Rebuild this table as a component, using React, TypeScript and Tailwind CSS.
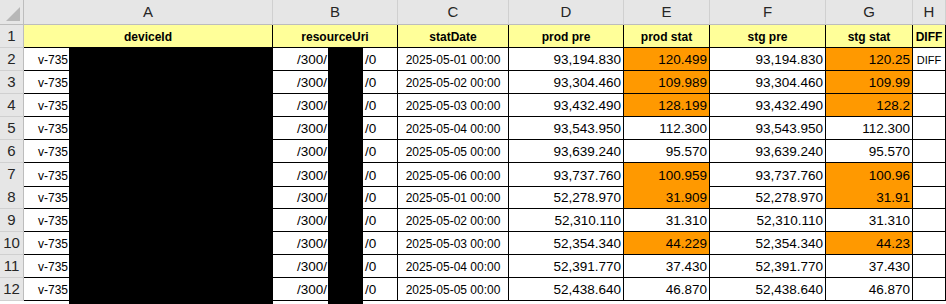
type Row = {
  n: number;
  date: string;
  prodPre: string;
  prodStat: string;
  stgPre: string;
  stgStat: string;
  hot: boolean;
  diff?: string;
};

const rows: Row[] = [
  { n: 2, date: "2025-05-01 00:00", prodPre: "93,194.830", prodStat: "120.499", stgPre: "93,194.830", stgStat: "120.25", hot: true, diff: "DIFF" },
  { n: 3, date: "2025-05-02 00:00", prodPre: "93,304.460", prodStat: "109.989", stgPre: "93,304.460", stgStat: "109.99", hot: true },
  { n: 4, date: "2025-05-03 00:00", prodPre: "93,432.490", prodStat: "128.199", stgPre: "93,432.490", stgStat: "128.2", hot: true },
  { n: 5, date: "2025-05-04 00:00", prodPre: "93,543.950", prodStat: "112.300", stgPre: "93,543.950", stgStat: "112.300", hot: false },
  { n: 6, date: "2025-05-05 00:00", prodPre: "93,639.240", prodStat: "95.570", stgPre: "93,639.240", stgStat: "95.570", hot: false },
  { n: 7, date: "2025-05-06 00:00", prodPre: "93,737.760", prodStat: "100.959", stgPre: "93,737.760", stgStat: "100.96", hot: true },
  { n: 8, date: "2025-05-01 00:00", prodPre: "52,278.970", prodStat: "31.909", stgPre: "52,278.970", stgStat: "31.91", hot: true },
  { n: 9, date: "2025-05-02 00:00", prodPre: "52,310.110", prodStat: "31.310", stgPre: "52,310.110", stgStat: "31.310", hot: false },
  { n: 10, date: "2025-05-03 00:00", prodPre: "52,354.340", prodStat: "44.229", stgPre: "52,354.340", stgStat: "44.23", hot: true },
  { n: 11, date: "2025-05-04 00:00", prodPre: "52,391.770", prodStat: "37.430", stgPre: "52,391.770", stgStat: "37.430", hot: false },
  { n: 12, date: "2025-05-05 00:00", prodPre: "52,438.640", prodStat: "46.870", stgPre: "52,438.640", stgStat: "46.870", hot: false },
];

const letters = ["A", "B", "C", "D", "E", "F", "G", "H"];
const headers = ["deviceId", "resourceUri", "statDate", "prod pre", "prod stat", "stg pre", "stg stat", "DIFF"];

const cell = "flex items-end border-r border-b border-black leading-[16px] pb-[2px] overflow-hidden whitespace-nowrap";
const num = "justify-end pr-[2px] text-[13.5px]";

export default function App() {
  return (
    <div className="relative w-[946px] h-[304px] overflow-hidden bg-white text-black font-['Liberation_Sans',Arial,sans-serif]">
      <div className="grid grid-cols-[24px_249px_125px_111px_115px_86px_116px_87px_33px] auto-rows-[23px] [grid-template-rows:25px]">
        {/* column letters */}
        <div className="relative bg-[#e6e6e6] border-r border-b border-[#bdbdbd]">
          <svg className="absolute right-[3px] bottom-[3px]" width="14" height="14" viewBox="0 0 14 14">
            <polygon points="14,0 14,14 0,14" fill="#b7b7b7" />
          </svg>
        </div>
        {letters.map((l) => (
          <div
            key={l}
            className="flex items-center justify-center bg-[#e6e6e6] border-r border-b border-r-[#d0d0d0] border-b-[#bdbdbd] text-[15px] text-[#262626]"
          >
            {l}
          </div>
        ))}

        {/* row 1 */}
        <div className="flex items-center justify-center bg-[#e6e6e6] border-r border-b border-r-[#bdbdbd] border-b-[#d0d0d0] text-[15px] text-[#262626]">
          1
        </div>
        {headers.map((h) => (
          <div key={h} className={`${cell} justify-center bg-[#ffff99] text-[12px] font-bold`}>
            {h}
          </div>
        ))}

        {rows.map((r) => (
          <Line key={r.n} r={r} />
        ))}
      </div>

      {/* redactions */}
      <div className="absolute left-[69px] top-[48px] w-[204px] h-[256px] bg-black" />
      <div className="absolute left-[328px] top-[48px] w-[35px] h-[256px] bg-black" />
    </div>
  );
}

function Line({ r }: { r: Row }) {
  const tall = r.n === 7 ? "h-[24px]" : "h-[23px]";
  const hot = r.hot ? "bg-[#ff9900]" : "";
  return (
    <>
      <div
        className={`${tall} flex items-center justify-center bg-[#e6e6e6] border-r border-b border-r-[#bdbdbd] border-b-[#d0d0d0] text-[15px] text-[#262626]`}
      >
        {r.n}
      </div>
      <div className={`${tall} ${cell} pl-[14px] text-[12px]`}>v-735</div>
      <div className={`${tall} ${cell} pl-[24px] text-[13.5px]`}>
        <span className="w-[31px] shrink-0">/300/</span>
        <span className="w-[37px] shrink-0" />
        <span>/0</span>
      </div>
      <div className={`${tall} ${cell} justify-center text-[12px]`}>{r.date}</div>
      <div className={`${tall} ${cell} ${num}`}>{r.prodPre}</div>
      <div className={`${tall} ${cell} ${num} ${hot}`}>{r.prodStat}</div>
      <div className={`${tall} ${cell} ${num}`}>{r.stgPre}</div>
      <div className={`${tall} ${cell} ${num} ${hot}`}>{r.stgStat}</div>
      <div className={`${tall} ${cell} justify-center text-[11px]`}>{r.diff ?? ""}</div>
    </>
  );
}
